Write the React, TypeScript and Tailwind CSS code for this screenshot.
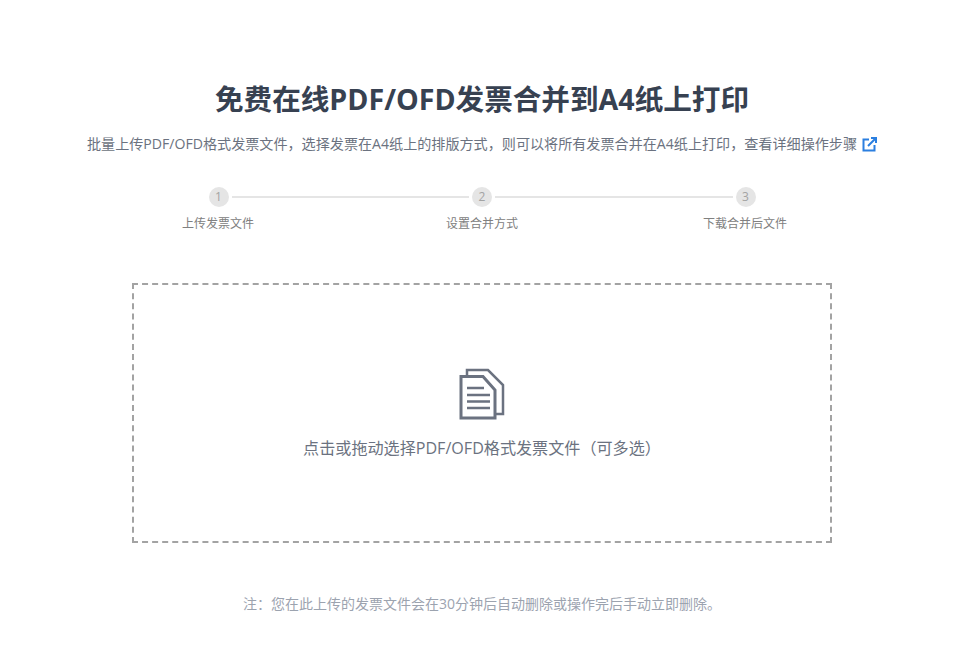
const steps = ['上传发票文件', '设置合并方式', '下载合并后文件']

function StepDot({ num }: { num: number }) {
  return (
    <div className="w-5 h-5 shrink-0 rounded-full bg-[#e5e5e5] text-[#a3a3a3] text-xs flex items-center justify-center">
      {num}
    </div>
  )
}

function FilesIcon() {
  return (
    <svg width="46" height="52" viewBox="0 0 46 52" fill="none" stroke="#6b7280" strokeWidth="3">
      <path d="M8 8V2h21l15 15v29h-8" strokeWidth="2.5" />
      <path d="M2 8.500h22L36 22v28H2z" fill="#fff" />
      <path d="M8 20h17M8 27h23M8 33.500h23M8 40h23" strokeWidth="2.5" />
    </svg>
  )
}

function ExternalIcon() {
  return (
    <svg width="15" height="15" viewBox="0 0 15 15" fill="none" stroke="#2b7fe0" strokeWidth="2">
      <path d="M7 2.500H1.500v11h11V8" />
      <path d="M6 9l8-8M9 1h5v5" />
    </svg>
  )
}

export default function App() {
  return (
    <div className="min-h-[659px] bg-white pl-[11px] flex flex-col items-center font-['Open_Sans','Noto_Sans_CJK_SC',sans-serif]">
      <h1 className="mt-[79px] text-[28.6px] leading-[40px] font-bold text-[#374151]">
        免费在线PDF/OFD发票合并到A4纸上打印
      </h1>
      <div className="mt-[15px] flex items-center gap-[5px] text-[14.1px] leading-5 text-[#6b7280]">
        <span>批量上传PDF/OFD格式发票文件，选择发票在A4纸上的排版方式，则可以将所有发票合并在A4纸上打印，查看详细操作步骤</span>
        <ExternalIcon />
      </div>

      <div className="mt-[33px] w-[547px] flex items-center">
        <StepDot num={1} />
        <div className="flex-1 h-0.5 mx-[3px] bg-[#e5e5e5]" />
        <StepDot num={2} />
        <div className="flex-1 h-0.5 mx-[3px] bg-[#e5e5e5]" />
        <StepDot num={3} />
      </div>
      <div className="mt-[9px] w-[640px] grid grid-cols-3 text-xs leading-4 text-[#808080]">
        <span className="text-left pl-[20px]">{steps[0]}</span>
        <span className="text-center">{steps[1]}</span>
        <span className="text-right pr-[15px]">{steps[2]}</span>
      </div>

      <div className="mt-[51px] w-[700px] h-[260px] border-2 border-dashed border-[#a3a3a3] flex flex-col items-center pt-[83px]">
        <FilesIcon />
        <p className="mt-[16px] text-[16.1px] leading-6 text-[#6b7280]">点击或拖动选择PDF/OFD格式发票文件（可多选）</p>
      </div>

      <p className="mt-[51px] text-sm leading-5 text-[#9ca3af]">
        注：您在此上传的发票文件会在30分钟后自动删除或操作完后手动立即删除。
      </p>
    </div>
  )
}
